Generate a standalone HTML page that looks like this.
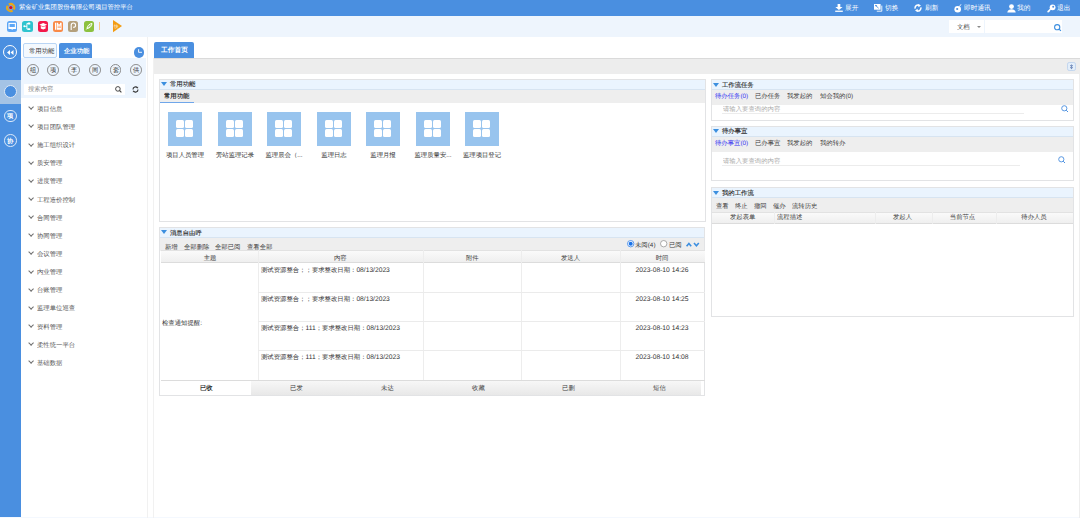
<!DOCTYPE html>
<html><head><meta charset="utf-8">
<style>
*{box-sizing:border-box;margin:0;padding:0}
html,body{width:1080px;height:518px;overflow:hidden;background:#fff;font-family:"Liberation Sans",sans-serif;color:#333;text-rendering:geometricPrecision}
.a{position:absolute}
svg{position:absolute;overflow:visible}
/* scaled text: font 12px, k=.53 => 6.36px; ink center ~ top+3.5 */
.t{position:absolute;white-space:nowrap;font-size:12px;line-height:15px;transform:scale(.53);transform-origin:0 0;color:#404040;margin-top:-0.6px}
.c{transform-origin:50% 0;display:flex;justify-content:center}
.dg{font-size:12.6px}
.w{color:#fff}
.ico{position:absolute;top:21px;width:10.4px;height:10.6px;border-radius:2.5px}
.cir{position:absolute;top:64.2px;width:11.8px;height:11.8px;border:0.6px solid #8a8a8a;border-radius:50%}
.chev{position:absolute;left:28.95px;width:4.2px;height:4.2px;border-right:0.85px solid #707070;border-bottom:0.85px solid #707070;transform:rotate(45deg)}
.panel{position:absolute;border:1px solid #e2e3e5;background:#fff}
.ph{position:absolute;left:0;top:0;right:0;height:10px;background:#eaf4fe;border-bottom:1px solid #d7e4f1}
.tri{position:absolute;width:0;height:0;border-left:3.7px solid transparent;border-right:3.7px solid transparent;border-top:4.2px solid #3b8fdf}
.tile{position:absolute;top:112px;width:34px;height:34px;background:#98c4ee}
.tile i{position:absolute;width:8px;height:8px;background:#fff;border-radius:1.5px}
.gray{position:absolute;background:#eeeeee}
.vl{position:absolute;width:1px;background:#ededed}
.hl{position:absolute;height:1px;background:#ebebeb}
.btab{position:absolute;top:380.5px;height:14.5px;background:linear-gradient(#f7f7f7,#e8e8e8)}
</style></head><body>
<!-- ================= header ================= -->
<div class="a" style="left:0;top:0;width:1080px;height:15.8px;background:#4a8fe0"></div>
<svg style="left:6.4px;top:2.8px" width="9.4" height="9.2" viewBox="0 0 9.4 9.2"><circle cx="4.7" cy="4.6" r="2.6" fill="#7fa3cf"/><path d="M2.77 1.56A3.6 3.6 0 0 1 7.74 6.53" stroke="#e6a91c" stroke-width="2" fill="none"/><path d="M6.63 7.64A3.6 3.6 0 0 1 1.66 2.67" stroke="#e6a91c" stroke-width="2" fill="none"/><circle cx="4.8" cy="4.5" r="1.6" fill="#d8062b"/></svg>
<div class="t w" style="left:18.9px;top:3.9px;transform:scale(.527)">紫金矿业集团股份有限公司项目管控平台</div>
<svg style="left:835.2px;top:4px" width="8" height="8" viewBox="0 0 8 8"><path d="M2.6 0h2.7v3.1h2.3L3.95 6.1 0.3 3.1h2.3z" fill="#fff"/><rect x="0.2" y="6.6" width="7.6" height="1.3" fill="#fff"/></svg>
<div class="t w" style="left:845px;top:4.8px;transform:scale(.558)">展开</div>
<svg style="left:874.2px;top:4.4px" width="9" height="8" viewBox="0 0 9 8"><rect x="0" y="0" width="6.6" height="5.7" fill="#fff"/><path d="M1.6 1.4L4.6 4.2" stroke="#4a8fe0" stroke-width="0.9"/><rect x="1.2" y="1" width="1.6" height="1.2" fill="#4a8fe0"/><path d="M7.8 1.6V7.2H2.8" stroke="#fff" stroke-width="0.9" fill="none"/></svg>
<div class="t w" style="left:885px;top:4.8px;transform:scale(.558)">切换</div>
<svg style="left:913.8px;top:4px" width="8" height="8" viewBox="0 0 8 8"><path d="M1.1 4.6A3 3 0 0 1 5.2 1.2" stroke="#fff" stroke-width="1.5" fill="none"/><path d="M4.2 0L7 1.6 4.4 3.2z" fill="#fff"/><path d="M6.9 3.4A3 3 0 0 1 2.8 6.8" stroke="#fff" stroke-width="1.5" fill="none"/><path d="M3.8 8L1 6.4 3.6 4.8z" fill="#fff"/></svg>
<div class="t w" style="left:924.5px;top:4.8px;transform:scale(.558)">刷新</div>
<svg style="left:954px;top:4px" width="8" height="9" viewBox="0 0 8 9"><circle cx="3.7" cy="5.3" r="3.3" fill="#fff"/><circle cx="3.2" cy="5" r="1.1" fill="#4a8fe0"/><path d="M5.5 2.5L7 0.3" stroke="#fff" stroke-width="0.9"/></svg>
<div class="t w" style="left:963.7px;top:4.8px;transform:scale(.558)">即时通讯</div>
<svg style="left:1006.5px;top:4px" width="9" height="9" viewBox="0 0 9 9"><circle cx="4.5" cy="2.6" r="2.4" fill="#fff"/><path d="M0.3 8.6C0.5 6 2.5 5.2 4.5 5.2S8.5 6 8.7 8.6z" fill="#fff"/></svg>
<div class="t w" style="left:1017.2px;top:4.8px;transform:scale(.558)">我的</div>
<svg style="left:1046.5px;top:4px" width="9" height="9" viewBox="0 0 9 9"><circle cx="5.6" cy="3.3" r="2.9" fill="#fff"/><circle cx="6.2" cy="2.7" r="1" fill="#4a8fe0"/><path d="M3.6 5L0.6 8.2" stroke="#fff" stroke-width="1.5"/><path d="M1.4 6.6l1 1" stroke="#fff" stroke-width="0.9"/></svg>
<div class="t w" style="left:1057px;top:4.8px;transform:scale(.558)">退出</div>

<!-- ================= toolbar ================= -->
<div class="a" style="left:0;top:15.8px;width:1080px;height:21.4px;background:#eef5fd"></div>
<div class="ico" style="left:6.8px;background:#5ba6f6"><svg style="left:0;top:0" width="10.4" height="10.6" viewBox="0 0 10.4 10.6"><rect x="2" y="2.4" width="6.4" height="4.2" fill="none" stroke="#fff" stroke-width="1.1"/><path d="M1.45 6.6h7.5v1.3H6.3L5.2 8.8 4.1 7.9H1.45z" fill="#fff"/></svg></div>
<div class="ico" style="left:22.2px;background:#2fc4cf"><svg style="left:0;top:0" width="10.4" height="10.6" viewBox="0 0 10.4 10.6"><path d="M6 2.5H4.9v5.6H6 M2.4 5.3H4.9" stroke="#fff" stroke-width="0.9" fill="none"/><rect x="5.6" y="1.6" width="2.7" height="1.8" rx="0.5" fill="#fff"/><rect x="5.6" y="7.2" width="2.7" height="1.8" rx="0.5" fill="#fff"/><circle cx="2.3" cy="5.3" r="1" fill="#fff"/></svg></div>
<div class="ico" style="left:37.8px;background:#f3194b"><svg style="left:0;top:0" width="10.4" height="10.6" viewBox="0 0 10.4 10.6"><path d="M1.3 3.8L5.2 2 9.1 3.8 5.2 5.4z" fill="#fff"/><path d="M2.8 4.9V7.6Q5.2 9.2 7.6 7.6V4.9L5.2 6.1z" fill="#fff"/></svg></div>
<div class="ico" style="left:52.8px;background:#f98a48"><svg style="left:0;top:0" width="10.4" height="10.6" viewBox="0 0 10.4 10.6"><path d="M2 1.8h1.2v7H2z M3.8 1.8h1.4v1.4h1.8V1.8h1.6v7H3.8z" fill="#fff"/><path d="M4.6 5.2h3.4 M4.6 6.5h3.4" stroke="#f98a48" stroke-width="0.6"/></svg></div>
<div class="ico" style="left:67.9px;background:#b4a07c"><svg style="left:0;top:0" width="10.4" height="10.6" viewBox="0 0 10.4 10.6"><path d="M3.2 9V4.2C3.2 2.8 4.2 2 5.4 2S7.6 2.8 7.6 4.2 6.6 6.4 5.2 6.4" stroke="#fff" stroke-width="1.1" fill="none"/></svg></div>
<div class="ico" style="left:83.7px;background:#8cc13f"><svg style="left:0;top:0" width="10.4" height="10.6" viewBox="0 0 10.4 10.6"><path d="M3 7.5C3.2 4.8 5.4 2.8 8 2.5 7.8 5.2 5.8 7.3 3 7.5z" fill="none" stroke="#fff" stroke-width="1"/><path d="M2.2 8.6L6.6 4" stroke="#fff" stroke-width="0.7"/></svg></div>
<div class="a" style="left:99px;top:22px;width:0.9px;height:8px;background:#f5c88a"></div>
<svg style="left:112.5px;top:19.8px" width="9" height="12.2" viewBox="0 0 9 12.2"><path d="M0 0L9 6.1 0 12.2z" fill="#f39c12"/><text x="1.1" y="7.9" font-size="4.6" fill="#fff" opacity="0.85" font-family="Liberation Sans">快</text></svg>
<div class="a" style="left:949px;top:19.8px;width:35px;height:13.7px;background:#fff"></div>
<div class="t" style="left:957.2px;top:23.4px">文档</div>
<div class="a" style="left:976.8px;top:26.2px;width:0;height:0;border-left:2.1px solid transparent;border-right:2.1px solid transparent;border-top:2.2px solid #8a8a8a"></div>
<div class="a" style="left:984.8px;top:19.8px;width:77.7px;height:13.7px;background:#fff"></div>
<svg style="left:1053.7px;top:24.2px" width="8" height="8" viewBox="0 0 8 8"><circle cx="3.2" cy="3.2" r="2.6" fill="none" stroke="#3d8fe0" stroke-width="1.1"/><path d="M5.1 5.1L6.9 6.9" stroke="#3d8fe0" stroke-width="1.2"/></svg>

<!-- ================= left bar ================= -->
<div class="a" style="left:0;top:37.2px;width:21px;height:479.5px;background:#4a8fe0"></div>
<div class="a" style="left:0;top:517px;width:1080px;height:1px;background:#f4f8fe"></div>
<div class="a" style="left:0;top:79.8px;width:21px;height:24.1px;background:#a4c3e5"></div>
<div class="a" style="left:3px;top:45px;width:14px;height:14px;border:0.9px solid #fff;border-radius:50%"></div>
<svg style="left:6.5px;top:49.5px" width="7" height="5" viewBox="0 0 7 5"><path d="M3 0L0 2.5 3 5z M6.5 0L3.5 2.5 6.5 5z" fill="#fff"/></svg>
<div class="a" style="left:3.7px;top:84.6px;width:13.4px;height:13.4px;border:0.9px solid #dfe9f5;border-radius:50%;background:#4a8fe0"></div>
<div class="a" style="left:4.1px;top:109.6px;width:12.6px;height:12.6px;border:0.7px solid rgba(255,255,255,.8);border-radius:50%"></div>
<div class="t w c" style="left:0.4px;width:20px;top:112.7px;transform:scale(.52);font-weight:bold">项</div>
<div class="a" style="left:4.1px;top:134.2px;width:12.6px;height:12.6px;border:0.7px solid rgba(255,255,255,.8);border-radius:50%"></div>
<div class="t w c" style="left:0.4px;width:20px;top:137.3px;transform:scale(.52);font-weight:bold">协</div>

<!-- ================= sidebar ================= -->
<div class="a" style="left:21px;top:58px;width:125.3px;height:40.2px;background:#edf5fe"></div>
<div class="a" style="left:147px;top:37.2px;width:1px;height:481px;background:#f1f1f1"></div>
<div class="a" style="left:23.2px;top:43.2px;width:34.3px;height:14.6px;border:0.8px solid #b9d5f5;background:#f4f9fe;border-radius:2px"></div>
<div class="t" style="left:28.7px;top:47.8px;color:#333">常用功能</div>
<div class="a" style="left:58.6px;top:43px;width:33.8px;height:15.2px;background:#4a8fe0;border-radius:2px 2px 0 0"></div>
<div class="t w" style="left:63.5px;top:47.8px;font-weight:bold;-webkit-text-stroke:0">企业功能</div>
<div class="a" style="left:133.8px;top:47px;width:10.6px;height:10.6px;border-radius:50%;background:#4a8fe0"></div>
<svg style="left:137.5px;top:49.3px" width="5" height="5" viewBox="0 0 5 5"><path d="M0.6 0.2V3.3H4" stroke="#fff" stroke-width="0.9" fill="none"/></svg>
<div class="cir" style="left:26.9px"></div><div class="t c" style="left:22.7px;width:20px;top:66.2px;transform:scale(.52);color:#333">组</div>
<div class="cir" style="left:47.2px"></div><div class="t c" style="left:43px;width:20px;top:66.2px;transform:scale(.52);color:#333">项</div>
<div class="cir" style="left:68.1px"></div><div class="t c" style="left:63.9px;width:20px;top:66.2px;transform:scale(.52);color:#333">李</div>
<div class="cir" style="left:88.9px"></div><div class="t c" style="left:84.7px;width:20px;top:66.2px;transform:scale(.52);color:#333">同</div>
<div class="cir" style="left:109.7px"></div><div class="t c" style="left:105.5px;width:20px;top:66.2px;transform:scale(.52);color:#333">套</div>
<div class="cir" style="left:130.1px"></div><div class="t c" style="left:125.9px;width:20px;top:66.2px;transform:scale(.52);color:#333">供</div>
<div class="a" style="left:24px;top:83.5px;width:101px;height:11px;background:#fff"></div>
<div class="t" style="left:27.5px;top:85.2px;color:#8a8a8a">搜索内容</div>
<svg style="left:115.3px;top:86px" width="7" height="7" viewBox="0 0 7 7"><circle cx="2.9" cy="2.9" r="2.3" fill="none" stroke="#444" stroke-width="1"/><path d="M4.5 4.5L6.4 6.4" stroke="#444" stroke-width="1.1"/></svg>
<svg style="left:132.3px;top:85.5px" width="7" height="7" viewBox="0 0 7 7"><path d="M1 3.5A2.5 2.5 0 0 1 5.6 2.1 M6 3.5A2.5 2.5 0 0 1 1.4 4.9" stroke="#333" stroke-width="1.1" fill="none"/><path d="M4.6 1.2L6 2.5 6.2 0.8z M2.4 5.8L1 4.5 0.8 6.2z" fill="#444"/></svg>
<div class="chev" style="top:105.20px"></div><div class="t" style="left:37.4px;top:105.40px;color:#555">项目信息</div>
<div class="chev" style="top:123.35px"></div><div class="t" style="left:37.4px;top:123.55px;color:#555">项目团队管理</div>
<div class="chev" style="top:141.50px"></div><div class="t" style="left:37.4px;top:141.70px;color:#555">施工组织设计</div>
<div class="chev" style="top:159.65px"></div><div class="t" style="left:37.4px;top:159.85px;color:#555">质安管理</div>
<div class="chev" style="top:177.80px"></div><div class="t" style="left:37.4px;top:178.00px;color:#555">进度管理</div>
<div class="chev" style="top:195.95px"></div><div class="t" style="left:37.4px;top:196.15px;color:#555">工程造价控制</div>
<div class="chev" style="top:214.10px"></div><div class="t" style="left:37.4px;top:214.30px;color:#555">合同管理</div>
<div class="chev" style="top:232.25px"></div><div class="t" style="left:37.4px;top:232.45px;color:#555">协同管理</div>
<div class="chev" style="top:250.40px"></div><div class="t" style="left:37.4px;top:250.60px;color:#555">会议管理</div>
<div class="chev" style="top:268.55px"></div><div class="t" style="left:37.4px;top:268.75px;color:#555">内业管理</div>
<div class="chev" style="top:286.70px"></div><div class="t" style="left:37.4px;top:286.90px;color:#555">台账管理</div>
<div class="chev" style="top:304.85px"></div><div class="t" style="left:37.4px;top:305.05px;color:#555">监理单位巡查</div>
<div class="chev" style="top:323.00px"></div><div class="t" style="left:37.4px;top:323.20px;color:#555">资料管理</div>
<div class="chev" style="top:341.15px"></div><div class="t" style="left:37.4px;top:341.35px;color:#555">柔性统一平台</div>
<div class="chev" style="top:359.30px"></div><div class="t" style="left:37.4px;top:359.50px;color:#555">基础数据</div>

<!-- ================= main ================= -->
<div class="a" style="left:153px;top:58px;width:1px;height:460px;background:#f1f1f1"></div>
<div class="a" style="left:154.2px;top:42.2px;width:39.5px;height:15.8px;background:#4a8fe0;border-radius:2px 2px 0 0"></div>
<div class="t w" style="left:161.4px;top:46.6px;font-weight:bold;transform:scale(.56)">工作首页</div>
<div class="a" style="left:154px;top:58px;width:925.5px;height:15.5px;background:#ededed;border-top:1px solid #dadada"></div>
<div class="a" style="left:1067px;top:62px;width:8.7px;height:8.7px;background:#e3eefa;border:0.7px solid #c3d6ee;border-radius:2.2px"></div>
<svg style="left:1069.3px;top:63.6px" width="5" height="6" viewBox="0 0 5 6"><path d="M1 1.2L2.5 2.6 4 1.2 M1 3.2L2.5 4.6 4 3.2 M2.5 0.5V5" stroke="#7189b9" stroke-width="0.9" fill="none"/></svg>
<div class="a" style="left:1078.6px;top:73.5px;width:1px;height:445px;background:#eeeeee"></div>

<!-- panel 常用功能 -->
<div class="panel" style="left:159.2px;top:79.2px;width:546.8px;height:142.5px">
  <div class="ph"></div>
  <div class="gray" style="left:0;top:10.1px;right:0;height:12.6px"></div>
  <div class="a" style="left:0;top:21.6px;width:34px;height:1px;background:#6fa6ea"></div>
</div>
<div class="tri" style="left:161.2px;top:82px"></div>
<div class="t" style="left:170.4px;top:80.8px;color:#262626;-webkit-text-stroke:0.2px #262626">常用功能</div>
<div class="t" style="left:163.9px;top:92.7px;font-weight:bold;color:#333;-webkit-text-stroke:0">常用功能</div>
<div class="tile" style="left:168px"><i style="left:8.2px;top:8.4px"></i><i style="left:17.2px;top:8.4px"></i><i style="left:8.2px;top:17.4px"></i><i style="left:17.2px;top:17.4px"></i></div>
<div class="tile" style="left:217.5px"><i style="left:8.2px;top:8.4px"></i><i style="left:17.2px;top:8.4px"></i><i style="left:8.2px;top:17.4px"></i><i style="left:17.2px;top:17.4px"></i></div>
<div class="tile" style="left:267px"><i style="left:8.2px;top:8.4px"></i><i style="left:17.2px;top:8.4px"></i><i style="left:8.2px;top:17.4px"></i><i style="left:17.2px;top:17.4px"></i></div>
<div class="tile" style="left:316.5px"><i style="left:8.2px;top:8.4px"></i><i style="left:17.2px;top:8.4px"></i><i style="left:8.2px;top:17.4px"></i><i style="left:17.2px;top:17.4px"></i></div>
<div class="tile" style="left:366px"><i style="left:8.2px;top:8.4px"></i><i style="left:17.2px;top:8.4px"></i><i style="left:8.2px;top:17.4px"></i><i style="left:17.2px;top:17.4px"></i></div>
<div class="tile" style="left:415.5px"><i style="left:8.2px;top:8.4px"></i><i style="left:17.2px;top:8.4px"></i><i style="left:8.2px;top:17.4px"></i><i style="left:17.2px;top:17.4px"></i></div>
<div class="tile" style="left:465px"><i style="left:8.2px;top:8.4px"></i><i style="left:17.2px;top:8.4px"></i><i style="left:8.2px;top:17.4px"></i><i style="left:17.2px;top:17.4px"></i></div>
<div class="t c" style="left:135px;width:100px;top:151.5px;color:#333">项目人员管理</div>
<div class="t c" style="left:184.5px;width:100px;top:151.5px;color:#333">旁站监理记录</div>
<div class="t c" style="left:234px;width:100px;top:151.5px;color:#333">监理晨会（...</div>
<div class="t c" style="left:283.5px;width:100px;top:151.5px;color:#333">监理日志</div>
<div class="t c" style="left:333px;width:100px;top:151.5px;color:#333">监理月报</div>
<div class="t c" style="left:382.5px;width:100px;top:151.5px;color:#333">监理质量安...</div>
<div class="t c" style="left:432px;width:100px;top:151.5px;color:#333">监理项目登记</div>

<!-- panel 消息自由呼 -->
<div class="panel" style="left:159.2px;top:227.3px;width:546.3px;height:168.7px">
  <div class="ph"></div>
  <div class="gray" style="left:0;top:10px;right:0;height:12.3px"></div>
</div>
<div class="tri" style="left:161.2px;top:230.2px"></div>
<div class="t" style="left:170px;top:229.6px;color:#262626;-webkit-text-stroke:0.2px #262626">消息自由呼</div>
<div class="t" style="left:164.7px;top:243.1px">新增</div>
<div class="t" style="left:183.6px;top:243.1px">全部删除</div>
<div class="t" style="left:215.3px;top:243.1px">全部已阅</div>
<div class="t" style="left:247px;top:243.1px">查看全部</div>
<svg style="left:627px;top:240.2px" width="8" height="8" viewBox="0 0 8 8"><circle cx="3.7" cy="3.7" r="3.2" fill="#fff" stroke="#1a73e8" stroke-width="0.7"/><circle cx="3.7" cy="3.7" r="2" fill="#1a73e8"/></svg>
<div class="t" style="left:635.4px;top:241.6px">未阅(4)</div>
<svg style="left:660px;top:240.2px" width="8" height="8" viewBox="0 0 8 8"><circle cx="3.7" cy="3.7" r="3.2" fill="#fff" stroke="#777" stroke-width="0.6"/></svg>
<div class="t" style="left:669px;top:241.6px">已阅</div>
<svg style="left:686.3px;top:242.2px" width="14" height="5" viewBox="0 0 14 5"><path d="M0.6 4.2L2.9 1.5 5.2 4.2" stroke="#3d8fe0" stroke-width="1.6" fill="none"/><path d="M8 1L10.4 3.7 12.8 1" stroke="#3d8fe0" stroke-width="1.6" fill="none"/></svg>
<!-- table header -->
<div class="a" style="left:160.5px;top:250.3px;width:544.5px;height:13.2px;background:linear-gradient(#fafafa,#efefef);border-top:1px solid #e2e2e2;border-bottom:1px solid #dcdcdc"></div>
<div class="vl" style="left:258.3px;top:250.3px;height:129.7px"></div>
<div class="vl" style="left:422.8px;top:250.3px;height:129.7px"></div>
<div class="vl" style="left:521.3px;top:250.3px;height:129.7px"></div>
<div class="vl" style="left:620.3px;top:250.3px;height:129.7px"></div>
<div class="t c" style="left:160.5px;width:98px;top:254.6px">主题</div>
<div class="t c" style="left:258.3px;width:164.5px;top:254.6px">内容</div>
<div class="t c" style="left:422.8px;width:98.5px;top:254.6px">附件</div>
<div class="t c" style="left:521.3px;width:99px;top:254.6px">发送人</div>
<div class="t c" style="left:620.3px;width:84px;top:254.6px">时间</div>
<div class="hl" style="left:258.3px;top:292.2px;width:446.7px"></div>
<div class="hl" style="left:258.3px;top:321.3px;width:446.7px"></div>
<div class="hl" style="left:258.3px;top:350.3px;width:446.7px"></div>
<div class="t" style="left:162px;top:319.1px;color:#333">检查通知提醒:</div>
<div class="t" style="left:261.3px;top:266.7px;color:#333">测试资源整合；；要求整改日期：<span class="dg">08/13/2023</span></div>
<div class="t" style="left:261.3px;top:295.7px;color:#333">测试资源整合；；要求整改日期：<span class="dg">08/13/2023</span></div>
<div class="t" style="left:261.3px;top:324.5px;color:#333">测试资源整合；<span class="dg">111</span>；要求整改日期：<span class="dg">08/13/2023</span></div>
<div class="t" style="left:261.3px;top:353.5px;color:#333">测试资源整合；<span class="dg">111</span>；要求整改日期：<span class="dg">08/13/2023</span></div>
<div class="t c" style="left:620.3px;width:84px;top:266.7px;color:#333;font-size:12.7px">2023-08-10 14:26</div>
<div class="t c" style="left:620.3px;width:84px;top:295.7px;color:#333;font-size:12.7px">2023-08-10 14:25</div>
<div class="t c" style="left:620.3px;width:84px;top:324.5px;color:#333;font-size:12.7px">2023-08-10 14:23</div>
<div class="t c" style="left:620.3px;width:84px;top:353.5px;color:#333;font-size:12.7px">2023-08-10 14:08</div>
<div class="hl" style="left:160.5px;top:380px;width:544.5px;background:#dcdcdc"></div>
<div class="btab" style="left:160.5px;width:90.5px;background:#fff"></div>
<div class="btab" style="left:251px;width:450.4px"></div>
<div class="t c" style="left:160.5px;width:90.5px;top:384.8px;font-weight:bold;color:#333">已收</div>
<div class="t c" style="left:251px;width:90.8px;top:384.8px">已发</div>
<div class="t c" style="left:341.8px;width:90.8px;top:384.8px">未达</div>
<div class="t c" style="left:432.6px;width:90.8px;top:384.8px">收藏</div>
<div class="t c" style="left:523.4px;width:90.8px;top:384.8px">已删</div>
<div class="t c" style="left:614.2px;width:90.8px;top:384.8px">短信</div>

<!-- ================= right panels ================= -->
<div class="panel" style="left:711.2px;top:79.2px;width:363px;height:41.5px">
  <div class="ph"></div>
  <div class="gray" style="left:0;top:10px;right:0;height:14.5px"></div>
  <div class="a" style="left:9.5px;top:33.2px;width:302px;height:1px;background:#ececec"></div>
  <svg style="left:348.5px;top:24.5px" width="8" height="8" viewBox="0 0 8 8"><circle cx="3.3" cy="3.3" r="2.6" fill="none" stroke="#4a8fe0" stroke-width="0.9"/><path d="M5.2 5.2L7 7" stroke="#4a8fe0" stroke-width="1"/></svg>
</div>
<div class="tri" style="left:713px;top:82.6px"></div>
<div class="t" style="left:722.4px;top:81.2px;color:#262626;-webkit-text-stroke:0.2px #262626">工作流任务</div>
<div class="t" style="left:714.7px;top:93px;color:#3434f2">待办任务(0)</div>
<div class="t" style="left:755.1px;top:93px">已办任务</div>
<div class="t" style="left:787.3px;top:93px">我发起的</div>
<div class="t" style="left:819.9px;top:93px">知会我的(0)</div>
<div class="t" style="left:722.8px;top:105.2px;color:#aaa">请输入要查询的内容</div>

<div class="panel" style="left:711.2px;top:125.5px;width:363px;height:55.8px">
  <div class="ph"></div>
  <div class="gray" style="left:0;top:10.5px;right:0;height:14.5px"></div>
  <div class="a" style="left:9.5px;top:38px;width:298px;height:1px;background:#ececec"></div>
  <svg style="left:346px;top:29.5px" width="8" height="8" viewBox="0 0 8 8"><circle cx="3.3" cy="3.3" r="2.6" fill="none" stroke="#4a8fe0" stroke-width="0.9"/><path d="M5.2 5.2L7 7" stroke="#4a8fe0" stroke-width="1"/></svg>
</div>
<div class="tri" style="left:713px;top:129.2px"></div>
<div class="t" style="left:722.4px;top:127.9px;color:#262626;-webkit-text-stroke:0.2px #262626">待办事宜</div>
<div class="t" style="left:714.7px;top:139.8px;color:#3434f2">待办事宜(0)</div>
<div class="t" style="left:755.1px;top:139.8px">已办事宜</div>
<div class="t" style="left:787.3px;top:139.8px">我发起的</div>
<div class="t" style="left:819.9px;top:139.8px">我的转办</div>
<div class="t" style="left:722.8px;top:157.5px;color:#aaa">请输入要查询的内容</div>

<div class="panel" style="left:711.2px;top:187.3px;width:363px;height:130px">
  <div class="ph"></div>
  <div class="gray" style="left:0;top:10px;right:0;height:13.5px"></div>
  <div class="a" style="left:0;top:23.5px;right:0;height:12.6px;background:linear-gradient(#fafafa,#efefef);border-top:1px solid #e2e2e2;border-bottom:1px solid #dcdcdc"></div>
  <div class="vl" style="left:62.2px;top:23.5px;height:12.6px"></div>
  <div class="vl" style="left:163px;top:23.5px;height:12.6px"></div>
  <div class="vl" style="left:220.2px;top:23.5px;height:12.6px"></div>
  <div class="vl" style="left:283.4px;top:23.5px;height:12.6px"></div>
</div>
<div class="tri" style="left:713px;top:190.9px"></div>
<div class="t" style="left:722.4px;top:189.7px;color:#262626;-webkit-text-stroke:0.2px #262626">我的工作流</div>
<div class="t" style="left:715.7px;top:202.7px">查看</div>
<div class="t" style="left:734.7px;top:202.7px">终止</div>
<div class="t" style="left:753.9px;top:202.7px">撤回</div>
<div class="t" style="left:772.9px;top:202.7px">催办</div>
<div class="t" style="left:791.7px;top:202.7px">流转历史</div>
<div class="t" style="left:729.5px;top:213.8px">发起表单</div>
<div class="t" style="left:776.9px;top:213.8px">流程描述</div>
<div class="t c" style="left:874.2px;width:57px;top:213.8px">发起人</div>
<div class="t c" style="left:931.4px;width:63px;top:213.8px">当前节点</div>
<div class="t c" style="left:994.6px;width:78px;top:213.8px">待办人员</div>
</body></html>
